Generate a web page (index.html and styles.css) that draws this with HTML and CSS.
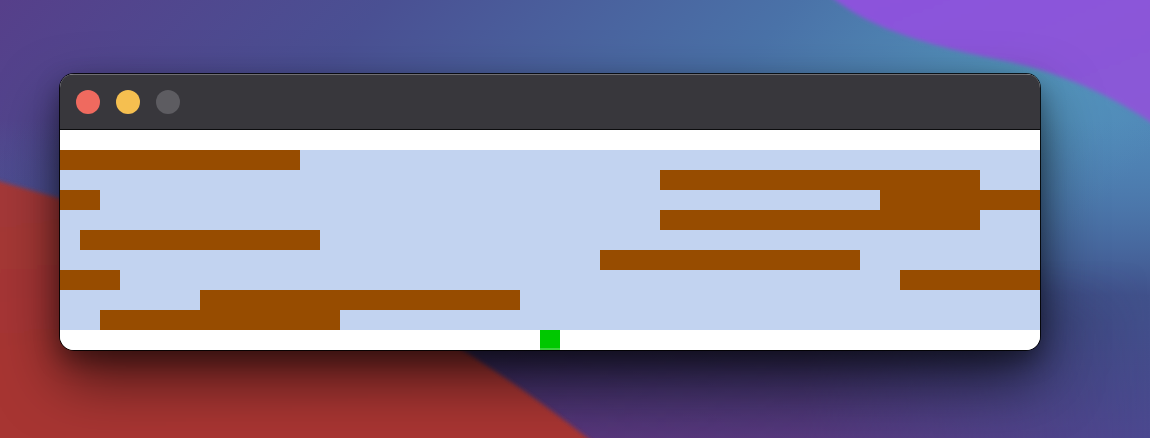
FILE: index.html
```html
<!DOCTYPE html>
<html>
<head>
<meta charset="utf-8">
<link rel="stylesheet" href="styles.css">
</head>
<body>
<div class="wallpaper">
  <svg width="1150" height="438" viewBox="0 0 1150 438" xmlns="http://www.w3.org/2000/svg">
    <defs>
      <linearGradient id="base" x1="0" y1="0" x2="1" y2="0.35">
        <stop offset="0" stop-color="#563f8a"/>
        <stop offset="0.3" stop-color="#4a5093"/>
        <stop offset="0.62" stop-color="#4a72a8"/>
        <stop offset="0.85" stop-color="#5496bd"/>
        <stop offset="1" stop-color="#5088b8"/>
      </linearGradient>
      <linearGradient id="lower" x1="0" y1="0" x2="0" y2="1">
        <stop offset="0" stop-color="#4a70a8" stop-opacity="0"/>
        <stop offset="0.55" stop-color="#3a3a78" stop-opacity="0.7"/>
        <stop offset="1" stop-color="#4c4890" stop-opacity="1"/>
      </linearGradient>
      <linearGradient id="purple" x1="0" y1="0" x2="1" y2="1">
        <stop offset="0" stop-color="#8c52dc"/>
        <stop offset="1" stop-color="#8a5ad6"/>
      </linearGradient>
      <linearGradient id="red" x1="0" y1="0" x2="0.3" y2="1">
        <stop offset="0" stop-color="#a43838"/>
        <stop offset="1" stop-color="#a83430"/>
      </linearGradient>
      <linearGradient id="midv" x1="0" y1="0" x2="0" y2="1">
        <stop offset="0" stop-color="#2c2650" stop-opacity="0"/>
        <stop offset="0.35" stop-color="#2c2650" stop-opacity="0.9"/>
        <stop offset="1" stop-color="#583478" stop-opacity="1"/>
      </linearGradient>
      <linearGradient id="fadeR" x1="0" y1="0" x2="1" y2="0">
        <stop offset="0" stop-color="#fff" stop-opacity="1"/>
        <stop offset="0.55" stop-color="#fff" stop-opacity="0.8"/>
        <stop offset="1" stop-color="#fff" stop-opacity="0"/>
      </linearGradient>
      <mask id="midmask">
        <rect x="380" y="260" width="770" height="178" fill="url(#fadeR)"/>
      </mask>
      <filter id="soft" x="-10%" y="-10%" width="120%" height="120%">
        <feGaussianBlur stdDeviation="2"/>
      </filter>
    </defs>
    <rect width="1150" height="438" fill="url(#base)"/>
    <rect y="120" width="1150" height="318" fill="url(#lower)"/>
    <rect x="380" y="260" width="770" height="178" fill="url(#midv)" mask="url(#midmask)"/>
    <path d="M829 -5 C860 20 900 40 1000 60 C1060 72 1110 95 1155 125 L1155 -5 Z" fill="url(#purple)" filter="url(#soft)"/>
    <path d="M-5 180 C100 210 250 250 350 290 C420 320 500 370 594 443 L-5 443 Z" fill="url(#red)" filter="url(#soft)"/>
  </svg>
</div>

<div class="window">
  <div class="titlebar">
    <span class="light red"></span>
    <span class="light yellow"></span>
    <span class="light gray"></span>
  </div>
  <div class="board">
    <div class="row safe r1"></div>
    <div class="row water r2"></div>
    <div class="row water r3"></div>
    <div class="row water r4"></div>
    <div class="row water r5"></div>
    <div class="row water r6"></div>
    <div class="row water r7"></div>
    <div class="row water r8"></div>
    <div class="row water r9"></div>
    <div class="row water r10"></div>
    <div class="row safe r11"></div>

    <div class="log" style="grid-row:2;grid-column:1 / 13"></div>
    <div class="log" style="grid-row:3;grid-column:31 / 47"></div>
    <div class="log" style="grid-row:4;grid-column:1 / 3"></div>
    <div class="log" style="grid-row:4;grid-column:42 / 50"></div>
    <div class="log" style="grid-row:5;grid-column:31 / 47"></div>
    <div class="log" style="grid-row:6;grid-column:2 / 14"></div>
    <div class="log" style="grid-row:7;grid-column:28 / 41"></div>
    <div class="log" style="grid-row:8;grid-column:1 / 4"></div>
    <div class="log" style="grid-row:8;grid-column:43 / 50"></div>
    <div class="log" style="grid-row:9;grid-column:8 / 24"></div>
    <div class="log" style="grid-row:10;grid-column:3 / 15"></div>
    <div class="frog" style="grid-row:11;grid-column:25 / 26"></div>
  </div>
</div>
</body>
</html>
```

FILE: styles.css
```css
html, body {
  margin: 0;
  padding: 0;
}
body {
  width: 1150px;
  height: 438px;
  overflow: hidden;
  position: relative;
  font-family: "Liberation Sans", Arial, sans-serif;
  background: #4a5a98;
}
.wallpaper {
  position: absolute;
  left: 0;
  top: 0;
  width: 1150px;
  height: 438px;
  z-index: 0;
}
.wallpaper svg {
  display: block;
}
.window {
  position: relative;
  z-index: 1;
  margin: 74px 0 0 60px;
  width: 980px;
  border-radius: 14px;
  overflow: hidden;
  background: #ffffff;
  box-shadow:
    0 0 0 1px rgba(0, 0, 0, 0.85),
    0 28px 60px rgba(0, 0, 0, 0.6),
    0 10px 24px rgba(0, 0, 0, 0.35);
}
.titlebar {
  height: 56px;
  box-sizing: border-box;
  background: #38373c;
  border-bottom: 1px solid #0c0c0e;
  box-shadow: inset 0 1px 0 rgba(255, 255, 255, 0.28);
  display: flex;
  align-items: center;
  gap: 16px;
  padding-left: 16px;
  padding-top: 1px;
}
.light {
  width: 24px;
  height: 24px;
  border-radius: 50%;
  display: block;
}
.light.red { background: #ef6a5f; }
.light.yellow { background: #f5bf50; }
.light.gray { background: #5d5c61; }
.board {
  display: grid;
  grid-template-columns: repeat(49, 20px);
  grid-template-rows: repeat(11, 20px);
}
.row {
  grid-column: 1 / -1;
}
.r1 { grid-row: 1; }
.r2 { grid-row: 2; }
.r3 { grid-row: 3; }
.r4 { grid-row: 4; }
.r5 { grid-row: 5; }
.r6 { grid-row: 6; }
.r7 { grid-row: 7; }
.r8 { grid-row: 8; }
.r9 { grid-row: 9; }
.r10 { grid-row: 10; }
.r11 { grid-row: 11; }
.safe { background: #ffffff; }
.water { background: #c2d3f0; }
.log { background: #974c00; }
.frog {
  background: #00c800;
  box-shadow: inset 0 -2px 0 #3fd23f;
}
```
